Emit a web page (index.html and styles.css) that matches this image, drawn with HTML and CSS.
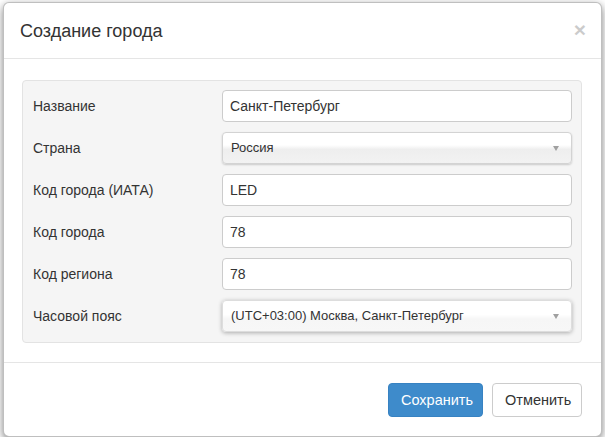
FILE: index.html
```html
<!DOCTYPE html>
<html lang="ru">
<head>
<meta charset="utf-8">
<title>Создание города</title>
<link rel="stylesheet" href="styles.css">
</head>
<body>
<div class="modal">
  <div class="modal-header">
    <h4 class="modal-title">Создание города</h4>
    <span class="close">×</span>
  </div>
  <div class="modal-body">
    <div class="well">
      <div class="form-row">
        <label class="label">Название</label>
        <div class="input">Санкт-Петербург</div>
      </div>
      <div class="form-row">
        <label class="label">Страна</label>
        <div class="select">Россия<span class="caret"></span></div>
      </div>
      <div class="form-row">
        <label class="label">Код города (ИАТА)</label>
        <div class="input">LED</div>
      </div>
      <div class="form-row">
        <label class="label">Код города</label>
        <div class="input">78</div>
      </div>
      <div class="form-row">
        <label class="label">Код региона</label>
        <div class="input">78</div>
      </div>
      <div class="form-row">
        <label class="label">Часовой пояс</label>
        <div class="select select-focus">(UTC+03:00) Москва, Санкт-Петербург<span class="caret"></span></div>
      </div>
    </div>
  </div>
  <div class="modal-footer">
    <button class="btn btn-primary">Сохранить</button>
    <button class="btn btn-default">Отменить</button>
  </div>
</div>
</body>
</html>
```
FILE: styles.css
```css
html, body {
  margin: 0;
  padding: 0;
  background: #fff;
  font-family: "Liberation Sans", Arial, sans-serif;
  font-size: 14px;
  color: #333;
}

.modal {
  margin: 2px 0 0 3px;
  width: 599px;
  box-sizing: border-box;
  background: #fff;
  border: 1px solid rgba(0, 0, 0, 0.25);
  border-radius: 6px;
  box-shadow: 0 3px 9px rgba(0, 0, 0, 0.5);
}

.modal-header {
  display: flex;
  align-items: center;
  justify-content: space-between;
  height: 55px;
  padding: 0 15px 0 16px;
  border-bottom: 1px solid #e5e5e5;
}

.modal-title {
  margin: 0;
  font-size: 18px;
  font-weight: normal;
  line-height: 26px;
  color: #333;
}

.close {
  font-size: 21px;
  font-weight: bold;
  line-height: 1;
  color: #000;
  opacity: 0.2;
  margin-top: -3px;
}

.modal-body {
  padding: 21px 19px 19px 18px;
}

.well {
  background: #f5f5f5;
  border: 1px solid #e3e3e3;
  border-radius: 4px;
  padding: 9px 9px 10px 10px;
  display: flex;
  flex-direction: column;
  gap: 10px;
}

.form-row {
  display: grid;
  grid-template-columns: 189px 350px;
  align-items: center;
}

.label {
  color: #333;
  font-size: 14px;
}

.input,
.select {
  box-sizing: border-box;
  height: 32px;
  line-height: 30px;
  padding: 0 7px;
  border: 1px solid #ccc;
  border-radius: 4px;
  background: #fff;
  color: #333;
  font-size: 14px;
  white-space: nowrap;
}

.select {
  position: relative;
  font-size: 13px;
  padding-left: 8px;
  border-color: #d3d3d3;
  background: linear-gradient(#fff 0%, #fff 40%, #eeeeee 55%, #f2f2f2 100%);
  box-shadow: 0 1px 2px rgba(0, 0, 0, 0.18);
}

.select-focus {
  background: linear-gradient(#fff 0%, #fff 45%, #f6f6f6 60%, #f7f7f7 100%);
  box-shadow: 0 1px 4px rgba(0, 0, 0, 0.3);
  border-color: #ddd;
}

.caret {
  position: absolute;
  right: 12px;
  top: 13px;
  width: 0;
  height: 0;
  border-left: 3.5px solid transparent;
  border-right: 3.5px solid transparent;
  border-top: 5px solid #a0a0a0;
}

.modal-footer {
  display: flex;
  justify-content: flex-end;
  gap: 9px;
  padding: 20px 19px 19px 20px;
  border-top: 1px solid #e5e5e5;
}

.btn {
  box-sizing: border-box;
  height: 34px;
  padding: 0 12px;
  font-family: "Liberation Sans", Arial, sans-serif;
  font-size: 14.5px;
  border-radius: 4px;
  border: 1px solid transparent;
  cursor: pointer;
}

.btn-primary {
  width: 95px;
  background: #3e8bcb;
  border-color: #3782c2;
  color: #fff;
}

.btn-default {
  width: 90px;
  background: #fff;
  border-color: #ccc;
  color: #333;
}
```
